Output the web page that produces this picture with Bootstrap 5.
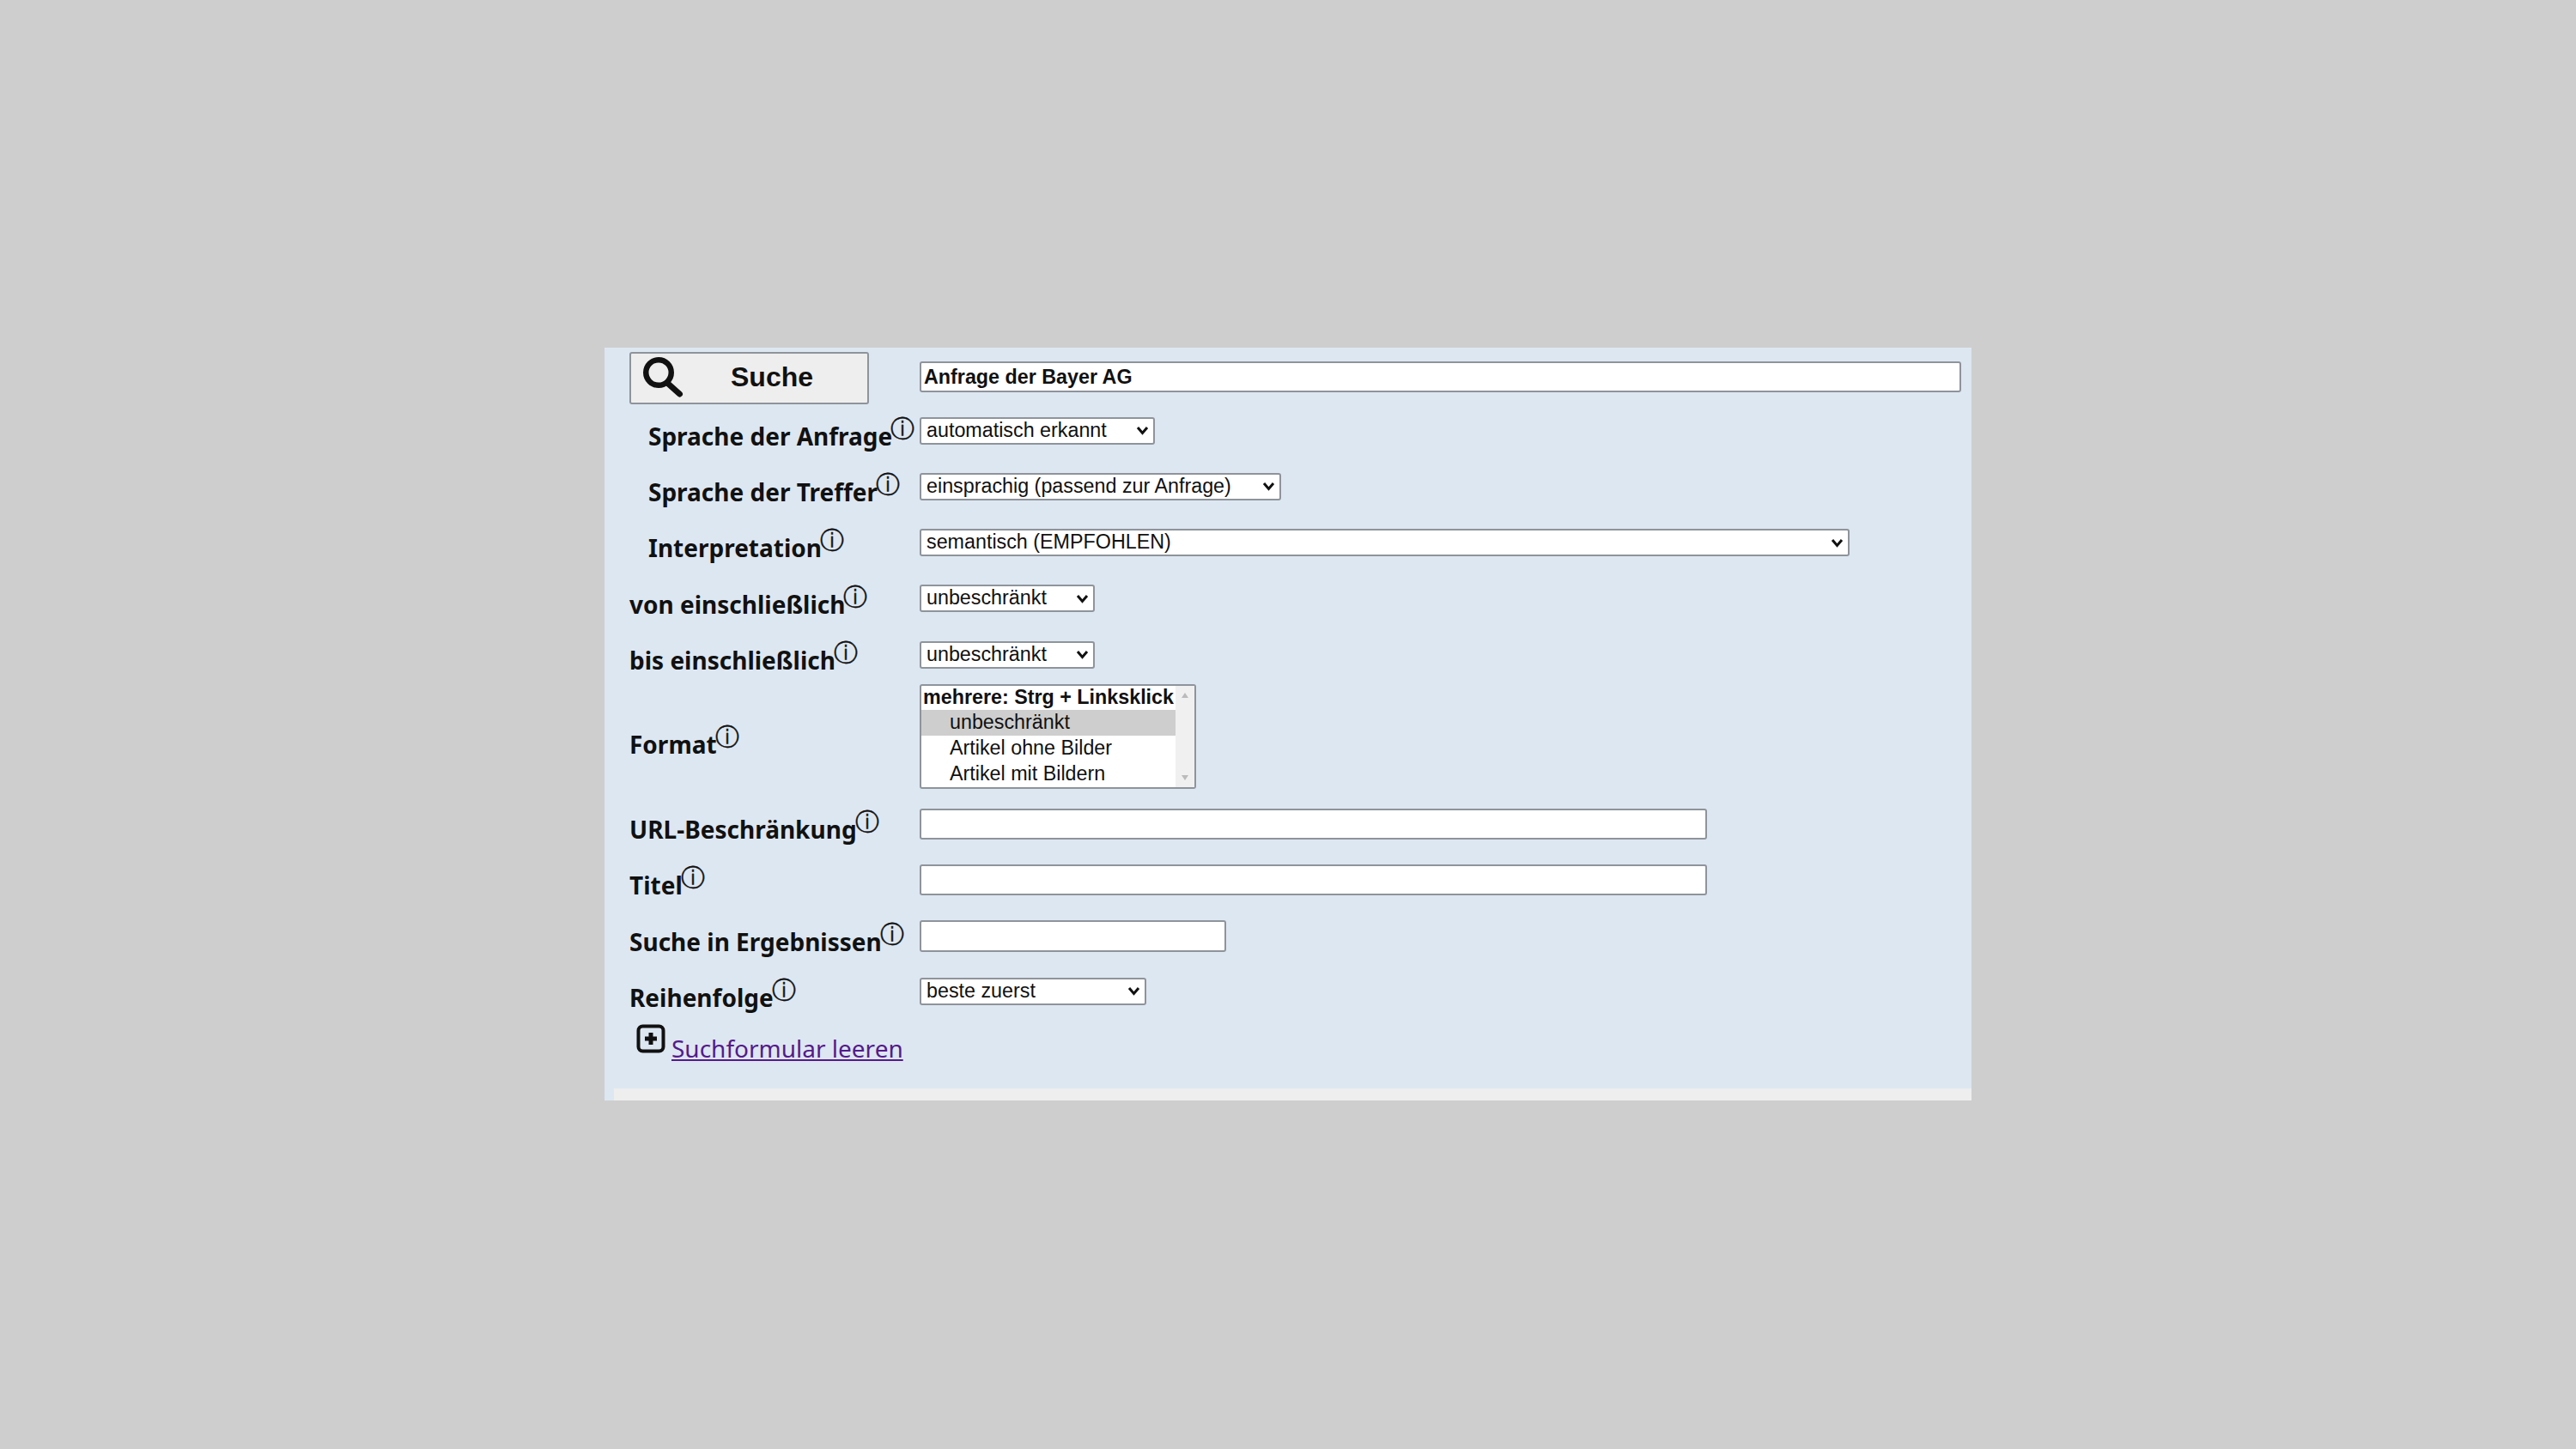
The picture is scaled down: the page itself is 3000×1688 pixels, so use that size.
<!DOCTYPE html>
<html lang="de">
<head>
<meta charset="utf-8">
<title>Suche</title>
<link href="https://cdn.jsdelivr.net/npm/bootstrap@5.3.0/dist/css/bootstrap.min.css" rel="stylesheet">
<style>
body{background:#cecece;color:#111;font-family:"Noto Sans","Open Sans",sans-serif}
.panel-box{width:1592px;margin-top:405px;background:#dde7f2;padding-left:29px;padding-right:12px}
.form-line{height:65.25px}
.line-search{height:64px;padding-top:6px}
.line-format{height:124.5px;margin-bottom:7.5px}
.line-foot{height:79.5px}
.lab-col{width:338px;flex:none;font-size:28px;font-weight:700;white-space:nowrap;line-height:1.2;padding-top:14px}
.lab-plain{padding-top:0}
.lab-format{padding-top:20px}
.lab-in{padding-left:22px}
.info-mark{font-family:"DejaVu Sans",sans-serif;font-weight:400;font-size:28px;line-height:0;position:relative;top:-10px;margin-left:-2px;color:#111;-webkit-text-stroke:.4px #111}
.field,.field-input{font-family:"Liberation Sans",Arial,sans-serif;font-size:23.3px;color:#111;background-color:#fff;border:2px solid #8f949b;border-radius:3px}
select.field{height:32px;padding:0 6px 2px;line-height:26px}
select.field:not(.list-multi){appearance:none;-webkit-appearance:none;background-repeat:no-repeat;background-position:right 5px center;background-size:15px 11px;background-image:url("data:image/svg+xml,%3Csvg xmlns='http://www.w3.org/2000/svg' viewBox='0 0 15 11'%3E%3Cpath d='M2 2l5.500 6.500L13 2' fill='none' stroke='%23111' stroke-width='3'/%3E%3C/svg%3E")}
.field-input{height:36px;padding:0 3px;display:block}
.w-q{width:1214px;font-weight:700;margin-top:-2px}
.w-lang{width:274px}
.w-tref{width:421px}
.w-int{width:1083px}
.w-date{width:204px}
.w-long{width:917px}
.w-in{width:357px;height:37px}
.w-sort{width:264px;margin-top:-2px}
.list-wrap{width:322px;height:122px}
select.list-multi{width:322px;height:122px;padding:0;overflow:hidden;display:block;line-height:normal}
select.list-multi optgroup{font-weight:700}
select.list-multi option{padding:1px 0 0 33px;line-height:30px;min-height:30px}
select.list-multi option:checked{background:#cecece;color:#111}
.list-scroll{top:2px;right:2px;bottom:2px;width:22px;background:#f0f0f0;padding:7px 0}
.search-btn{width:279px;height:61px;background:#eee;border:2px solid #8f949b;border-radius:3px;font-family:"Liberation Sans",Arial,sans-serif;font-size:32px;font-weight:700;color:#111;padding:0 0 2px 14px;gap:52px}
.search-btn:hover{background:#eee;color:#111;border-color:#8f949b}
.foot-icon{margin-left:8px;margin-top:5px}
.foot-link{font-size:28px;color:#551a8b;margin-left:7px;margin-top:12px}
.foot-strip{height:14px;background:#eee;margin-left:-18px;margin-right:-12px}
</style>
</head>
<body>
<form class="panel-box mx-auto">
  <div class="d-flex align-items-center line-search">
    <div class="lab-col lab-plain">
      <button type="button" class="btn search-btn d-flex align-items-center">
        <svg width="50" height="52" viewBox="0 0 50 52" aria-hidden="true"><circle cx="18" cy="21" r="14.75" fill="none" stroke="#111" stroke-width="6.5"/><path d="M28 33 L42.500 46" stroke="#111" stroke-width="7" stroke-linecap="round"/></svg>
        <span>Suche</span>
      </button>
    </div>
    <input class="field-input w-q" type="text" value="Anfrage der Bayer AG">
  </div>
  <div class="d-flex align-items-center form-line">
    <div class="lab-col lab-in">Sprache der Anfrage<span class="info-mark">ⓘ</span></div>
    <select class="field w-lang"><option>automatisch erkannt</option></select>
  </div>
  <div class="d-flex align-items-center form-line">
    <div class="lab-col lab-in">Sprache der Treffer<span class="info-mark">ⓘ</span></div>
    <select class="field w-tref"><option>einsprachig (passend zur Anfrage)</option></select>
  </div>
  <div class="d-flex align-items-center form-line">
    <div class="lab-col lab-in">Interpretation<span class="info-mark">ⓘ</span></div>
    <select class="field w-int"><option>semantisch (EMPFOHLEN)</option></select>
  </div>
  <div class="d-flex align-items-center form-line">
    <div class="lab-col">von einschließlich<span class="info-mark">ⓘ</span></div>
    <select class="field w-date"><option>unbeschränkt</option></select>
  </div>
  <div class="d-flex align-items-center form-line">
    <div class="lab-col">bis einschließlich<span class="info-mark">ⓘ</span></div>
    <select class="field w-date"><option>unbeschränkt</option></select>
  </div>
  <div class="d-flex align-items-center line-format">
    <div class="lab-col lab-format">Format<span class="info-mark">ⓘ</span></div>
    <div class="list-wrap position-relative">
      <select class="field list-multi" multiple size="4">
        <optgroup label="mehrere: Strg + Linksklick">
          <option selected>unbeschränkt</option>
          <option>Artikel ohne Bilder</option>
          <option>Artikel mit Bildern</option>
          <option>Bilder</option>
        </optgroup>
      </select>
      <div class="list-scroll position-absolute d-flex flex-column justify-content-between align-items-center" aria-hidden="true">
        <svg width="12" height="8" viewBox="0 0 12 8"><path d="M6 1l4 6H2z" fill="#bbb"/></svg>
        <svg width="12" height="8" viewBox="0 0 12 8"><path d="M6 7l4-6H2z" fill="#bbb"/></svg>
      </div>
    </div>
  </div>
  <div class="d-flex align-items-center form-line">
    <div class="lab-col">URL-Beschränkung<span class="info-mark">ⓘ</span></div>
    <input class="field-input w-long" type="text">
  </div>
  <div class="d-flex align-items-center form-line">
    <div class="lab-col">Titel<span class="info-mark">ⓘ</span></div>
    <input class="field-input w-long" type="text">
  </div>
  <div class="d-flex align-items-center form-line">
    <div class="lab-col">Suche in Ergebnissen<span class="info-mark">ⓘ</span></div>
    <input class="field-input w-in" type="text">
  </div>
  <div class="d-flex align-items-center form-line">
    <div class="lab-col">Reihenfolge<span class="info-mark">ⓘ</span></div>
    <select class="field w-sort"><option>beste zuerst</option></select>
  </div>
  <div class="d-flex align-items-start line-foot">
    <svg class="foot-icon" width="34" height="34" viewBox="0 0 34 34" aria-hidden="true"><rect x="2.500" y="2.500" width="29" height="29" rx="5" fill="none" stroke="#111" stroke-width="4"/><path d="M17 10v14M10 17h14" stroke="#111" stroke-width="5"/></svg>
    <a class="foot-link" href="#">Suchformular leeren</a>
  </div>
  <div class="foot-strip"></div>
</form>
</body>
</html>
